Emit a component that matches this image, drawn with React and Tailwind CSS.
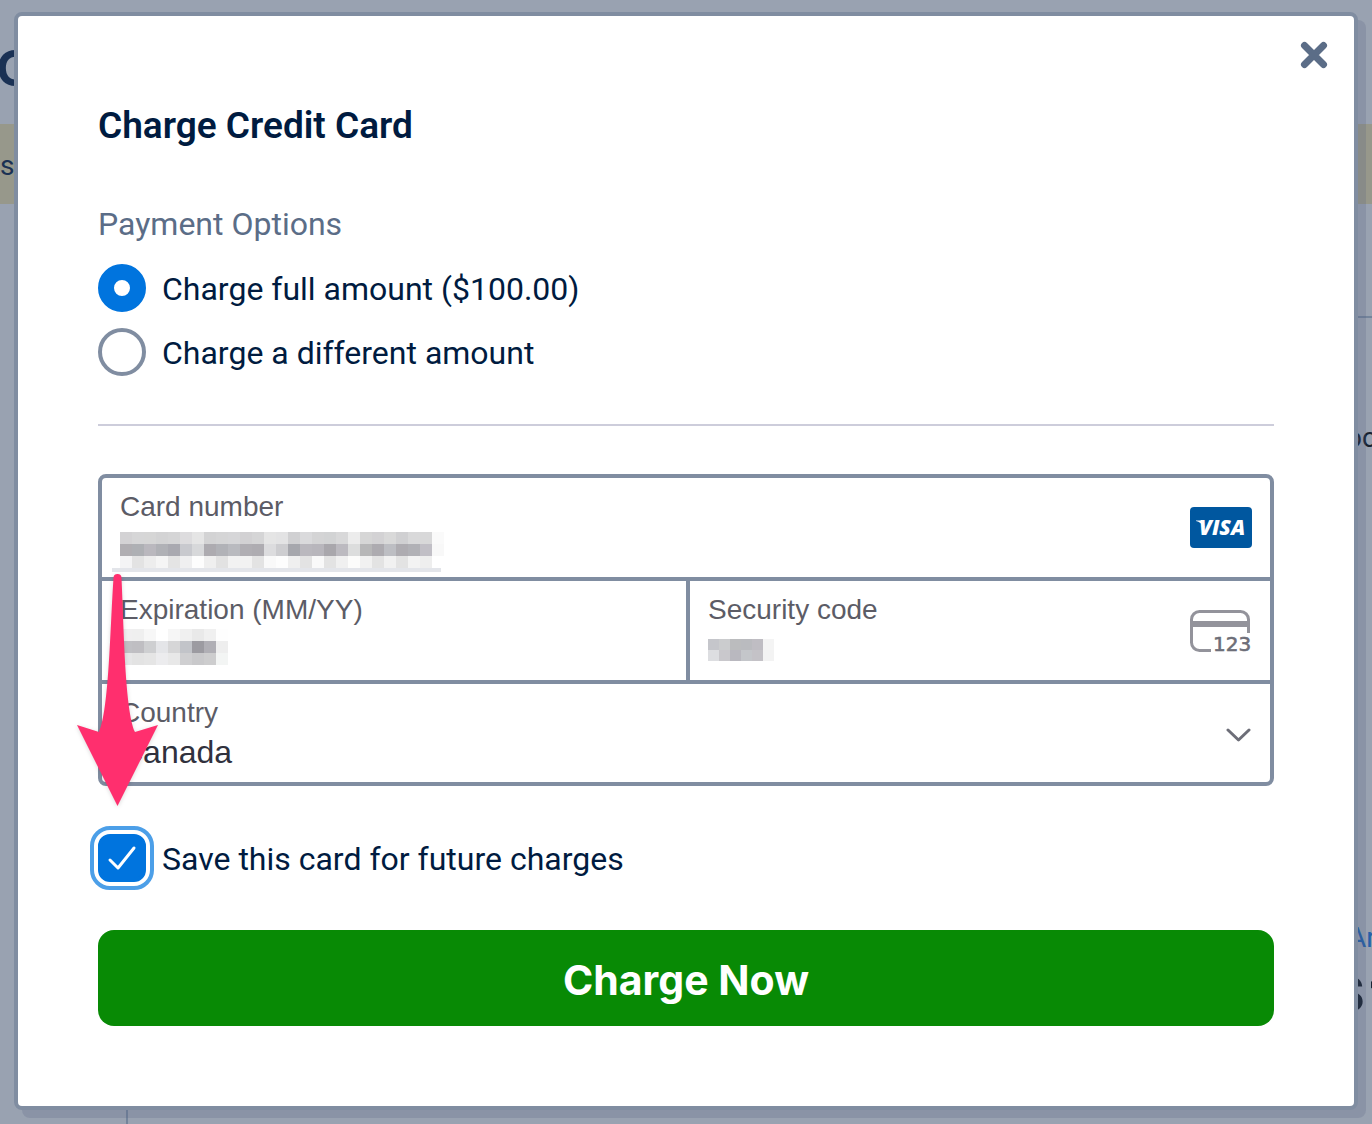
import { useState } from "react";

// Each row is one band of grey blocks over a masked value
const cardMask = [
  "d3d2d4 d6d6d7 d6d6d6 d3d3d4 d5d5d6 dddcde e5e5e5 d3d3d4 d5d5d6 d6d6d8 d2d1d3 d5d5d6 e5e5e5 e3e3e4 d0d0d2 dadadc d4d4d5 d2d3d4 d8d8d9 ececec d6d6d6 d3d2d4 d9d9d9 d0d0d2 d9d9da d8d8d9 fafafa",
  "b0aeb2 aeb0b4 bab8be b0b1b6 a9a9b0 c8c9ce d7d8da adabb0 b1b2b7 b9babf b0aeb3 aeacb1 dcdcde cdcdd0 a6a7ad bab8be b8b6bc a9a7ac bcbac0 dcdddd b7b7b8 adabb0 bdbec3 aeacb1 b1b1b6 c1bfc6 f8f8f8",
  "f4f4f5 e3e3e3 ededed f5f5f5 e4e4e4 efeff0 fdfdfd efefef e2e2e2 f2f2f2 f2f2f2 e3e3e3 f9f9f9 fdfdfd efefef e3e3e3 f9f9f9 e3e3e3 f0f0f0 fcfcfb f1f1f1 e3e3e3 f1f1f1 e3e3e3 f3f3f3 eeeeee ffffff",
];

const expiryMask = [
  "f0eff0 efefef f7f7f7 ffffff f6f6f6 f0f0f0 e9e9e9 f0f0f0 fefefe",
  "c0c0c4 bfbec2 cecfd1 e4e5e8 d6d6d7 c2c4c9 9c9ba1 b0afb5 eeeeee",
  "e6e6e7 e3e3e3 e5e5e5 ececee e8e8e8 cfcfd1 c9c9cb cdcdce f3f5f4",
];

const codeMask = [
  "c5c6cb cbccce bbbcbe babbbf bfbdc3 f4f4f4",
  "dddee1 c9c8cc b9b8bf c4c6ca c4c2c7 f3f3f3",
];

const Mask = ({ rows, cell, className }) => (
  <div aria-hidden="true" className={`pointer-events-none absolute ${className}`}>
    {rows.map((row, i) => (
      <div key={i} className="flex">
        {row.split(" ").map((color, j) => (
          <span key={j} className={cell} style={{ backgroundColor: `#${color}` }} />
        ))}
      </div>
    ))}
  </div>
);

const VisaLogo = () => (
  <svg width="62" height="42" viewBox="0 0 62 42" role="img" aria-label="Visa">
    <rect width="62" height="41" rx="4" fill="#00579f" />
    <path d="M6 13.500h7l1.500 7C12 17 9.500 14.800 6 14z" fill="#fff" />
    <text
      x="9"
      y="28"
      fill="#fff"
      fontFamily="'Open Sans', sans-serif"
      fontSize="21"
      fontWeight="800"
      fontStyle="italic"
    >
      VISA
    </text>
  </svg>
);

const CodeIcon = () => (
  <svg width="62" height="42" viewBox="0 0 62 42" fill="none" aria-hidden="true">
    <path
      d="M21 40.500H9.500a8 8 0 0 1-8-8v-23a8 8 0 0 1 8-8h41a8 8 0 0 1 8 8V23"
      stroke="#93939b"
      strokeWidth="3"
    />
    <path d="M1.500 14h57" stroke="#93939b" strokeWidth="6" />
    <text
      x="23"
      y="41"
      fill="#6d6e78"
      stroke="#6d6e78"
      strokeWidth="0.6"
      fontFamily="'DejaVu Sans', sans-serif"
      fontSize="20"
    >
      123
    </text>
  </svg>
);

const Arrow = () => (
  <svg
    width="90"
    height="240"
    viewBox="0 0 90 240"
    aria-hidden="true"
    className="pointer-events-none absolute -left-7 top-23 drop-shadow-sm"
  >
    <path
      d="M39.500 8a4 4 0 0 1 8 0C50 60 51 140 61 162L84 155 43.500 236 3 155l22 7C35 140 36 60 39.500 8z"
      fill="#ff2f6e"
    />
  </svg>
);

// Invoice page that stays dimmed behind the dialog
const PageBehind = () => (
  <div
    aria-hidden="true"
    className="absolute inset-0 flex flex-col overflow-hidden bg-[#99a2b1] text-[#1a3154]"
  >
    <div className="flex h-31 items-center">
      <span className="-ml-1 pt-3 font-['Inter'] text-[50px] leading-none font-bold">C</span>
    </div>
    <div className="flex h-20 items-center bg-[#97988b]">
      <span className="pt-1 font-['Roboto'] text-[28px]">s</span>
    </div>
    <div className="ml-auto flex w-10 flex-1 flex-col whitespace-nowrap text-[#172231]">
      <div className="mt-28 h-0.5 shrink-0 bg-[#74849b]" />
      <span className="mt-25 pl-3.5 font-['Roboto'] text-[28px] leading-10">oc</span>
      <span className="mt-115 pl-4 font-['Roboto'] text-[28px] leading-10 text-[#2560a8]">Ar</span>
      <div className="mt-3 flex gap-1 font-['Inter'] text-[50px] leading-12 font-bold">
        <span>$</span>
        <span>1</span>
      </div>
    </div>
    <div className="ml-[126px] h-5 w-0.5 bg-[#74849b]" />
  </div>
);

const labelClass = "block text-[28px] leading-[34px] text-[#5c5c66]";
const fieldClass = "block h-9 w-full text-[32px] leading-9 text-[#30313d] outline-none";

const App = () => {
  const [option, setOption] = useState("full");
  const [country, setCountry] = useState("Canada");
  const [saveCard, setSaveCard] = useState(true);

  const radioClass =
    "size-12 shrink-0 appearance-none rounded-full border-4 border-[#808da1] bg-white checked:border-[16px] checked:border-[#0074de]";

  return (
    <div className="relative min-h-screen overflow-hidden px-3.5 pt-3 pb-3.5 font-['Roboto',sans-serif]">
      <PageBehind />

      <div
        role="dialog"
        aria-labelledby="dialog-title"
        className="relative rounded-lg border-4 border-[#808da1] bg-white text-[#001b40] shadow-[8px_8px_0_rgba(78,92,127,0.2)]"
      >
        <div className="flex justify-end pt-6 pr-6">
          <button type="button" aria-label="Close" className="size-8">
            <svg viewBox="0 0 32 32" stroke="#5b6d87" strokeWidth="7" strokeLinecap="round">
              <path d="M6.500 5.500l19 19M25.500 5.500l-19 19" />
            </svg>
          </button>
        </div>

        <form className="px-20 pt-8 pb-20" onSubmit={(e) => e.preventDefault()}>
          <h2 id="dialog-title" className="text-[37px] leading-11 font-semibold">
            Charge Credit Card
          </h2>

          <fieldset className="mt-14">
            <legend className="text-[32px] leading-10 text-[#5b6d87]">Payment Options</legend>
            <div className="mt-5 flex flex-col gap-4 text-[32px] leading-10">
              <label className="flex items-center gap-4">
                <input
                  type="radio"
                  name="option"
                  checked={option === "full"}
                  onChange={() => setOption("full")}
                  className={radioClass}
                />
                <span className="pt-0.5">Charge full amount ($100.00)</span>
              </label>
              <label className="flex items-center gap-4">
                <input
                  type="radio"
                  name="option"
                  checked={option === "different"}
                  onChange={() => setOption("different")}
                  className={radioClass}
                />
                <span className="pt-0.5">Charge a different amount</span>
              </label>
            </div>
          </fieldset>

          <hr className="my-12 border-t-2 border-[#cdcddb]" />

          <div className="relative rounded-lg border-4 border-[#808da1] font-['Liberation_Sans',sans-serif]">
            <div className="flex h-[103px] items-center border-b-4 border-[#808da1] px-[18px]">
              <div className="flex-1 self-start pt-3">
                <label htmlFor="number" className={labelClass}>
                  Card number
                </label>
                <div className="relative mt-1">
                  <input id="number" type="text" className={fieldClass} />
                  <Mask rows={cardMask} cell="size-3" className="top-1 left-0" />
                  <div className="absolute top-10 -left-2 h-1 w-[329px] bg-[#e3e5ea]" />
                </div>
              </div>
              <VisaLogo />
            </div>

            <div className="grid h-[103px] grid-cols-2 border-b-4 border-[#808da1]">
              <div className="px-[18px] pt-3">
                <label htmlFor="expiry" className={labelClass}>
                  Expiration (MM/YY)
                </label>
                <div className="relative mt-1">
                  <input id="expiry" type="text" className={fieldClass} />
                  <Mask rows={expiryMask} cell="size-3" className="-top-0.5 left-0" />
                </div>
              </div>
              <div className="flex items-center border-l-4 border-[#808da1] px-[18px]">
                <div className="flex-1 self-start pt-3">
                  <label htmlFor="code" className={labelClass}>
                    Security code
                  </label>
                  <div className="relative mt-1">
                    <input id="code" type="text" className={fieldClass} />
                    <Mask rows={codeMask} cell="size-[11px]" className="top-2 left-0" />
                  </div>
                </div>
                <CodeIcon />
              </div>
            </div>

            <div className="relative h-[98px] px-[18px] pt-3">
              <label htmlFor="country" className={labelClass}>
                Country
              </label>
              <select
                id="country"
                value={country}
                onChange={(e) => setCountry(e.target.value)}
                className={`mt-1 appearance-none ${fieldClass}`}
              >
                <option>Canada</option>
              </select>
              <svg
                width="26"
                height="16"
                viewBox="0 0 26 16"
                fill="none"
                stroke="#6d6e78"
                strokeWidth="3"
                strokeLinecap="round"
                strokeLinejoin="round"
                aria-hidden="true"
                className="pointer-events-none absolute top-[42px] right-[18px]"
              >
                <path d="M2 4l10.500 10L23 4" />
              </svg>
            </div>

            <Arrow />
          </div>

          <label className="mt-12 flex items-center gap-4 text-[32px] leading-10">
            <span className="relative size-12 shrink-0">
              <input
                type="checkbox"
                checked={saveCard}
                onChange={(e) => setSaveCard(e.target.checked)}
                className="block size-12 appearance-none rounded-xl border-4 border-[#808da1] outline-4 outline-offset-4 outline-[#4c9fe8] checked:border-[#0074de] checked:bg-[#0074de]"
              />
              {saveCard && (
                <svg
                  viewBox="0 0 48 48"
                  fill="none"
                  stroke="#fff"
                  strokeWidth="3"
                  strokeLinecap="round"
                  strokeLinejoin="round"
                  className="pointer-events-none absolute inset-0"
                >
                  <path d="M12 26l8 8L36 14" />
                </svg>
              )}
            </span>
            <span className="pt-0.5">Save this card for future charges</span>
          </label>

          <button
            type="submit"
            className="mt-12 h-24 w-full rounded-2xl bg-[#088a05] pt-1 font-['Inter',sans-serif] text-[41px] leading-none font-bold text-white"
          >
            Charge Now
          </button>
        </form>
      </div>
    </div>
  );
};

export default App;
